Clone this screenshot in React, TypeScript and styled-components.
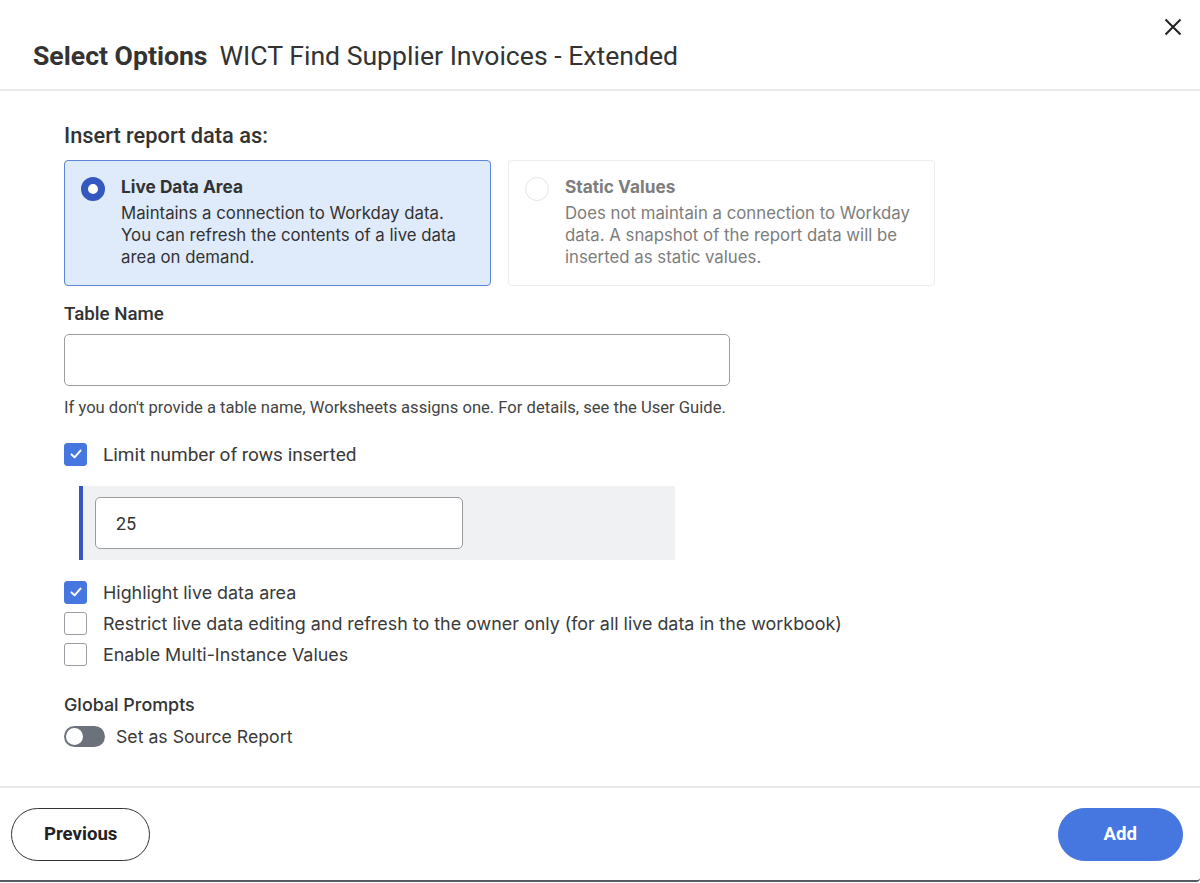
import React from 'react';
import styled, { createGlobalStyle } from 'styled-components';

const GlobalStyle = createGlobalStyle`
  html, body {
    margin: 0;
    padding: 0;
    background: #ffffff;
  }
  body {
    font-family: Roboto, "Liberation Sans", sans-serif;
    color: #333333;
  }
  * {
    box-sizing: border-box;
  }
`;

const Modal = styled.div`
  width: 1200px;
  height: 882px;
  display: flex;
  flex-direction: column;
  background: #ffffff;
  border-bottom: 2px solid #555a60;
  border-bottom-right-radius: 4px;
`;

const Header = styled.header`
  height: 91px;
  flex: none;
  display: flex;
  align-items: flex-start;
  justify-content: space-between;
  padding: 38px 13px 0 33px;
  border-bottom: 2px solid #e9e9ee;
`;

const Title = styled.h1`
  margin: 0;
  font-family: Roboto, sans-serif;
  font-size: 26.6px;
  line-height: 36px;
  font-weight: 400;
  color: #333333;
  strong {
    font-weight: 700;
    margin-right: 12px;
  }
`;

const CloseButton = styled.button`
  width: 28px;
  height: 28px;
  margin-top: -25px;
  padding: 0;
  border: none;
  background: transparent;
  color: #222222;
  display: flex;
  align-items: center;
  justify-content: center;
`;

const Body = styled.main`
  flex: 1;
  padding: 31px 64px 0;
  display: flex;
  flex-direction: column;
`;

const SectionLabel = styled.div<{ $size?: number }>`
  font-size: ${(p) => p.$size ?? 18.7}px;
  font-weight: 500;
  color: #333333;
  line-height: 28px;
`;

const CardRow = styled.div`
  display: flex;
  gap: 17px;
  margin-top: 10px;
`;

const Card = styled.div<{ $active?: boolean }>`
  width: 427px;
  height: 126px;
  display: flex;
  gap: 16px;
  padding: 15px 16px;
  border-radius: 4px;
  border: 1px solid ${(p) => (p.$active ? '#5c86d9' : '#ececec')};
  background: ${(p) => (p.$active ? '#dfeafb' : '#ffffff')};
  color: ${(p) => (p.$active ? '#333333' : '#7d7d7d')};
  font-family: Inter, Roboto, sans-serif;
`;

const Radio = styled.span<{ $checked?: boolean }>`
  flex: none;
  width: 24px;
  height: 24px;
  margin-top: 1px;
  border-radius: 50%;
  background: #ffffff;
  border: ${(p) => (p.$checked ? '7px solid #3458bf' : '1px solid #e4e4e4')};
`;

const CardText = styled.div`
  display: flex;
  flex-direction: column;
  font-size: 16.8px;
  line-height: 22px;
  h3 {
    margin: 0 0 4px;
    font-size: 17.3px;
    line-height: 22px;
    font-weight: 700;
  }
  p {
    margin: 0;
  }
`;

const FieldLabel = styled(SectionLabel)`
  margin-top: 14px;
`;

const TextInput = styled.input<{ $width: number }>`
  width: ${(p) => p.$width}px;
  height: 52px;
  padding: 0 20px;
  border: 1px solid #9a9ca0;
  border-radius: 5px;
  background: #ffffff;
  font-family: Roboto, sans-serif;
  font-size: 18px;
  color: #333333;
  outline: none;
`;

const TableInput = styled(TextInput)`
  margin-top: 6px;
`;

const Help = styled.div`
  margin-top: 12px;
  font-size: 16.6px;
  line-height: 20px;
  color: #444444;
`;

const CheckRow = styled.label<{ $gap?: number }>`
  display: flex;
  align-items: center;
  gap: 16px;
  height: 24px;
  margin-top: ${(p) => p.$gap ?? 7}px;
  color: #3a3a3a;
`;

const CheckLabel = styled.span<{ $inter?: boolean }>`
  font-family: ${(p) => (p.$inter ? 'Inter, Roboto, sans-serif' : 'Roboto, sans-serif')};
  font-size: ${(p) => (p.$inter ? 17.9 : 19)}px;
`;

const Box = styled.span<{ $checked?: boolean }>`
  flex: none;
  width: 23px;
  height: 23px;
  border-radius: 3px;
  display: flex;
  align-items: center;
  justify-content: center;
  background: ${(p) => (p.$checked ? '#4676df' : '#ffffff')};
  border: 1px solid ${(p) => (p.$checked ? '#4676df' : '#9a9ca3')};
`;

const Nested = styled.div`
  width: 596px;
  margin: 20px 0 0 15px;
  padding: 11px 0 11px 12px;
  background: #f0f1f3;
  border-left: 4px solid #3458bf;
`;

const SubLabel = styled(SectionLabel)`
  margin-top: 25px;
  font-family: Inter, Roboto, sans-serif;
  font-size: 17.9px;
`;

const ToggleRow = styled.div`
  display: flex;
  align-items: center;
  gap: 11px;
  margin-top: 7px;
  font-family: Inter, Roboto, sans-serif;
  font-size: 17.7px;
  color: #3a3a3a;
`;

const Track = styled.span`
  position: relative;
  width: 41px;
  height: 21px;
  border-radius: 11px;
  background: #6c727c;
`;

const Knob = styled.span`
  position: absolute;
  left: 2px;
  top: 2px;
  width: 17px;
  height: 17px;
  border-radius: 50%;
  background: #ffffff;
`;

const Footer = styled.footer`
  height: 94px;
  flex: none;
  display: flex;
  align-items: center;
  justify-content: space-between;
  padding: 0 17px 0 11px;
  border-top: 2px solid #e9e9ee;
`;

const PillButton = styled.button<{ $primary?: boolean }>`
  height: 53px;
  padding: 0 ${(p) => (p.$primary ? 45 : 32)}px;
  border-radius: 27px;
  font-family: Roboto, sans-serif;
  font-size: 18.6px;
  font-weight: 700;
  border: 1px solid ${(p) => (p.$primary ? '#4676df' : '#333333')};
  background: ${(p) => (p.$primary ? '#4676df' : '#ffffff')};
  color: ${(p) => (p.$primary ? '#ffffff' : '#222222')};
`;

const Check = () => (
  <svg width="14" height="14" viewBox="0 0 14 14" fill="none">
    <path d="M2.5 7.4 5.6 10.3 11.5 3.6" stroke="#fff" strokeWidth="2" strokeLinecap="round" strokeLinejoin="round" />
  </svg>
);

export default function App() {
  return (
    <>
      <GlobalStyle />
      <Modal>
        <Header>
          <Title>
            <strong>Select Options</strong>WICT Find Supplier Invoices - Extended
          </Title>
          <CloseButton aria-label="Close">
            <svg width="18" height="18" viewBox="0 0 18 18">
              <path d="M1.5 1.5 16.5 16.5M16.5 1.5 1.5 16.5" stroke="#222" strokeWidth="2" />
            </svg>
          </CloseButton>
        </Header>
        <Body>
          <SectionLabel $size={21.8}>Insert report data as:</SectionLabel>
          <CardRow>
            <Card $active>
              <Radio $checked />
              <CardText>
                <h3>Live Data Area</h3>
                <p>
                  Maintains a connection to Workday data. You can refresh the contents of a live data
                  area on demand.
                </p>
              </CardText>
            </Card>
            <Card>
              <Radio />
              <CardText>
                <h3>Static Values</h3>
                <p>
                  Does not maintain a connection to Workday data. A snapshot of the report data will be
                  inserted as static values.
                </p>
              </CardText>
            </Card>
          </CardRow>
          <FieldLabel>Table Name</FieldLabel>
          <TableInput $width={666} defaultValue="" />
          <Help>If you don't provide a table name, Worksheets assigns one. For details, see the User Guide.</Help>
          <CheckRow $gap={24}>
            <Box $checked>
              <Check />
            </Box>
            <CheckLabel>Limit number of rows inserted</CheckLabel>
          </CheckRow>
          <Nested>
            <TextInput $width={368} defaultValue="25" />
          </Nested>
          <CheckRow $gap={20}>
            <Box $checked>
              <Check />
            </Box>
            <CheckLabel $inter>Highlight live data area</CheckLabel>
          </CheckRow>
          <CheckRow>
            <Box />
            <CheckLabel $inter>
              Restrict live data editing and refresh to the owner only (for all live data in the workbook)
            </CheckLabel>
          </CheckRow>
          <CheckRow>
            <Box />
            <CheckLabel $inter>Enable Multi-Instance Values</CheckLabel>
          </CheckRow>
          <SubLabel>Global Prompts</SubLabel>
          <ToggleRow>
            <Track>
              <Knob />
            </Track>
            Set as Source Report
          </ToggleRow>
        </Body>
        <Footer>
          <PillButton>Previous</PillButton>
          <PillButton $primary>Add</PillButton>
        </Footer>
      </Modal>
    </>
  );
}
